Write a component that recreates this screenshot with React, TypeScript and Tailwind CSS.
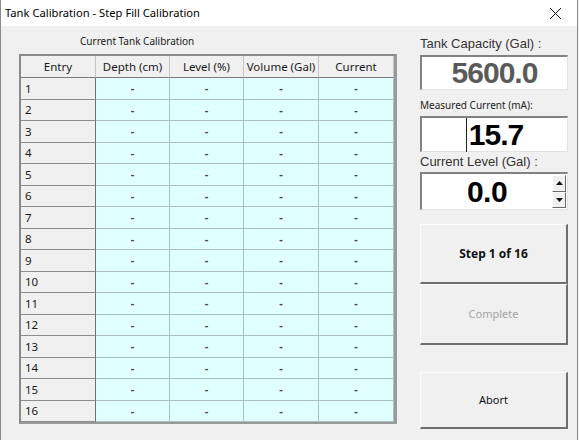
import React from 'react'

// ─── Data ─────────────────────────────────────────────────────────────────────

const columns = ['Entry', 'Depth (cm)', 'Level (%)', 'Volume (Gal)', 'Current']
const entries = Array.from({ length: 16 }, (_, i) => i + 1)

const ui = { fontFamily: '"Noto Sans", "Open Sans", sans-serif' }
const classic = { fontFamily: '"Liberation Sans", Arial, sans-serif' }

// ─── Calibration grid ─────────────────────────────────────────────────────────

function CalibrationGrid() {
  return (
    <div className="border-t-2 border-l-2 border-b-2 border-r-[3px] border-t-[#8a8a8a] border-l-[#8a8a8a] border-b-[#9a9a9a] border-r-[#9a9a9a] bg-[#f0f0f0]">
      {/* Header */}
      <div className="grid grid-cols-[75px_74px_74px_75px_75px] h-[22px]">
        {columns.map((c) => (
          <div
            key={c}
            className="flex items-center justify-center border-r border-b border-r-[#c4c4c4] border-b-[#7a7a7a] text-[11.5px] text-[#1a1a1a]"
          >
            {c}
          </div>
        ))}
      </div>

      {/* Rows */}
      {entries.map((n) => (
        <div key={n} className="grid grid-cols-[75px_74px_74px_75px_75px] h-[21.5px]">
          <div className="flex items-center pl-[4px] border-r border-b border-r-[#707070] border-b-[#8c8c8c] text-[11.5px] text-[#1a1a1a]">
            {n}
          </div>
          {[0, 1, 2, 3].map((k) => (
            <div
              key={k}
              className="flex items-center justify-center bg-[#e0ffff] border-r border-b border-r-[#aabfbf] border-b-[#aabfbf] text-[11px] font-bold text-[#444]"
            >
              -
            </div>
          ))}
        </div>
      ))}
    </div>
  )
}

// ─── Readout boxes ────────────────────────────────────────────────────────────

function Readout({ children, h }: { children: React.ReactNode; h: string }) {
  return (
    <div
      className={`${h} flex bg-white border-t-2 border-l-2 border-t-[#828282] border-l-[#828282] border-r border-b border-r-[#e2e2e2] border-b-[#e2e2e2]`}
    >
      {children}
    </div>
  )
}

function Spinner() {
  return (
    <div className="w-[14px] flex flex-col mr-[1px] my-[1px]">
      {['up', 'down'].map((d) => (
        <div
          key={d}
          className="flex-1 flex items-center justify-center bg-[#f0f0f0] border-t border-l border-t-white border-l-white border-r border-b border-r-[#6a6a6a] border-b-[#6a6a6a]"
        >
          <svg width="7" height="4" viewBox="0 0 7 4">
            {d === 'up' ? <path d="M0 4 L3.5 0 L7 4 Z" fill="#111" /> : <path d="M0 0 L3.5 4 L7 0 Z" fill="#111" />}
          </svg>
        </div>
      ))}
    </div>
  )
}

function WinButton({ children, className = '' }: { children: React.ReactNode; className?: string }) {
  return (
    <div
      className={`flex items-center justify-center bg-[#f0f0f0] border-t border-l border-t-[#fbfbfb] border-l-[#fbfbfb] border-r-2 border-b-2 border-r-[#6e6e6e] border-b-[#6e6e6e] ${className}`}
    >
      {children}
    </div>
  )
}

// ─── Window ───────────────────────────────────────────────────────────────────

export default function App() {
  return (
    <div className="w-[579px] h-[440px] overflow-hidden bg-[#f0f0f0]" style={ui}>
      <div className="w-[578px] h-[440px] flex flex-col border-x border-[#8a8a8a]">
        {/* ── Title bar ── */}
        <div className="h-[26px] flex-shrink-0 bg-white flex items-center justify-between pl-[4px] pr-[15px]">
          <span className="text-[11.2px] text-black">Tank Calibration - Step Fill Calibration</span>
          <svg width="13" height="13" viewBox="0 0 13 13">
            <path d="M1 1 L12 12 M12 1 L1 12" stroke="#111" strokeWidth="1" />
          </svg>
        </div>

        {/* ── Body ── */}
        <div className="flex-1 flex">
          {/* Left: table */}
          <div className="ml-[18px] w-[378px] flex flex-col">
            <div className="h-[28px] flex items-end pb-[5px] pl-[61px] text-[10px] text-[#222]">
              Current Tank Calibration
            </div>
            <CalibrationGrid />
          </div>

          {/* Right: readouts and buttons */}
          <div className="ml-[23px] w-[148px] flex flex-col">
            <div className="h-[29px] flex items-end pb-[2px] text-[13px] text-[#333]" style={classic}>
              Tank Capacity (Gal) :
            </div>
            <Readout h="h-[35px]">
              <div
                className="flex-1 flex items-center justify-center text-[30px] font-bold text-[#5a5a5a] tracking-[-1px] leading-none"
                style={classic}
              >
                5600.0
              </div>
            </Readout>

            <div className="h-[26px] flex items-end pb-[3px] text-[10px] text-[#222]">
              Measured Current (mA):
            </div>
            <Readout h="h-[36px]">
              <div
                className="flex-1 flex items-center justify-center text-[30px] font-bold text-black tracking-[-1px] leading-none"
                style={classic}
              >
                <span className="w-[1px] h-[34px] bg-[#222] mr-[2px]" />
                15.7
              </div>
            </Readout>

            <div className="h-[20px] flex items-end pb-[1px] text-[13px] text-[#333]" style={classic}>
              Current Level (Gal) :
            </div>
            <Readout h="h-[38px]">
              <div
                className="flex-1 flex items-center justify-center text-[30px] font-bold text-black tracking-[-0.5px] leading-none"
                style={classic}
              >
                0.0
              </div>
              <Spinner />
            </Readout>

            <WinButton className="mt-[14px] h-[60px] text-[12px] font-bold text-[#111]">Step 1 of 16</WinButton>
            <WinButton className="h-[61px] text-[11px] text-[#a3a3a3]">Complete</WinButton>
            <WinButton className="mt-[27px] h-[57px] text-[11px] text-[#111]">Abort</WinButton>
          </div>
        </div>
      </div>
    </div>
  )
}
